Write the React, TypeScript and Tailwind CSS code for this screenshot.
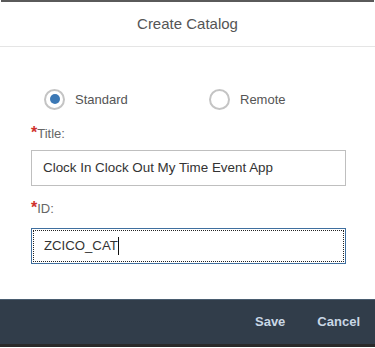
import React from "react";

export default function App() {
  return (
    <div
      className="w-[375px] h-[348px] bg-white flex flex-col overflow-hidden"
      style={{ fontFamily: '"Liberation Sans", Arial, sans-serif' }}
    >
      <div className="h-[2px] bg-[#5a5a5a] mx-[1px]" />
      <div className="h-[45px] flex items-center justify-center text-[15px] text-[#555555] border-b border-[#e5e5e5]">
        Create Catalog
      </div>
      <div className="pl-[31px] pr-[29px] flex flex-col">
        <div className="mt-[41px] flex items-center h-[22px]">
          <div className="flex items-center ml-[13px] w-[165px]">
            <div className="w-[21px] h-[21px] rounded-full border-2 border-[#c4c4c4] flex items-center justify-center">
              <div className="w-[10px] h-[10px] rounded-full bg-[#3b78b5]" />
            </div>
            <span className="ml-[10px] text-[13px] text-[#555555] pt-[1px]">Standard</span>
          </div>
          <div className="flex items-center">
            <div className="w-[21px] h-[21px] rounded-full border-2 border-[#c4c4c4]" />
            <span className="ml-[10px] text-[13px] text-[#555555] pt-[1px]">Remote</span>
          </div>
        </div>
        <div className="mt-[16px] h-[16px] flex items-center text-[13px] text-[#666666]">
          <span className="text-[#d0312d] text-[16px] font-bold leading-none -mt-[3px]">*</span>
          <span>Title:</span>
        </div>
        <div className="mt-[8px] h-[36px] border border-[#bfbfbf] flex items-center pl-[11px] text-[13.4px] text-[#333333]">
          Clock In Clock Out My Time Event App
        </div>
        <div className="mt-[15px] h-[16px] flex items-center text-[13px] text-[#666666]">
          <span className="text-[#d0312d] text-[16px] font-bold leading-none -mt-[3px]">*</span>
          <span>ID:</span>
        </div>
        <div className="mt-[11px] h-[36px] border border-[#3f6f9f] p-[1px]">
          <div className="h-full border border-dotted border-[#222222] flex items-center pl-[10px] text-[13.2px] text-[#333333]">
            ZCICO_CAT<span className="inline-block w-[1px] h-[18px] bg-[#111111]" />
          </div>
        </div>
      </div>
      <div className="mt-[35px] h-[45px] bg-[#313d4a] border-t border-[#4a5d70] flex items-center justify-end pr-[15px] gap-[32px] text-[13px] font-bold text-[#c9d7e5]">
        <span>Save</span>
        <span>Cancel</span>
      </div>
      <div className="h-[3px] bg-[#2a2a2a]" />
    </div>
  );
}
